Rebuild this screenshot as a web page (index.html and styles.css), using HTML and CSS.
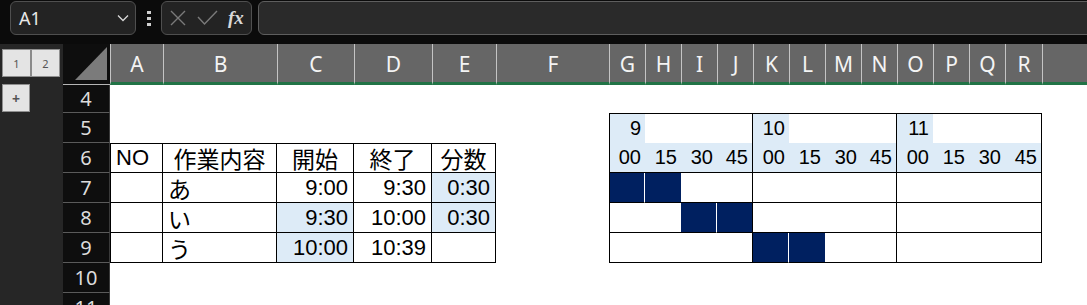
FILE: index.html
```html
<!DOCTYPE html>
<html lang="ja">
<head>
  <meta charset="UTF-8" />
  <title>Sheet</title>
  <link rel="stylesheet" href="styles.css">
</head>
<body>
  <div class="topbar">
    <div class="namebox">
      <span>A1</span>
      <svg class="chev" width="12" height="8" viewBox="0 0 12 8"><path d="M1 1.5 L6 6.5 L11 1.5" fill="none" stroke="#d8d8d8" stroke-width="1.3"/></svg>
    </div>
    <div class="dots"><i></i><i></i><i></i></div>
    <div class="fbtns">
      <svg width="16" height="16" viewBox="0 0 16 16"><path d="M1 1 L15 15 M15 1 L1 15" stroke="#7a7a7a" stroke-width="1.4"/></svg>
      <svg width="21" height="16" viewBox="0 0 21 16"><path d="M1 7 L7.5 14 L20 1" fill="none" stroke="#7a7a7a" stroke-width="1.4"/></svg>
      <span class="fx">fx</span>
    </div>
    <div class="fbar"></div>
  </div>

  <div class="main">
    <div class="outline">
      <div class="levels"><span>1</span><span>2</span></div>
      <div class="plus">+</div>
    </div>

    <div class="sheet">
      <!-- column headers -->
      <div class="corner"><svg width="32" height="33" viewBox="0 0 32 33"><path d="M0 33 L32 0 L32 33 Z" fill="#7b7b7b"/></svg></div>
      <div class="ch">A</div><div class="ch">B</div><div class="ch">C</div><div class="ch">D</div><div class="ch">E</div><div class="ch">F</div>
      <div class="ch">G</div><div class="ch">H</div><div class="ch">I</div><div class="ch">J</div><div class="ch">K</div><div class="ch">L</div>
      <div class="ch">M</div><div class="ch">N</div><div class="ch">O</div><div class="ch">P</div><div class="ch">Q</div><div class="ch">R</div>
      <div class="ch"></div>

      <!-- row 4 -->
      <div class="rh">4</div>
      <div class="c span"></div>

      <!-- row 5 -->
      <div class="rh">5</div>
      <div class="c"></div><div class="c"></div><div class="c"></div><div class="c"></div><div class="c"></div><div class="c"></div>
      <div class="c g t l ra blue">9</div><div class="c g t"></div><div class="c g t"></div><div class="c g t r"></div>
      <div class="c g t ra blue">10</div><div class="c g t"></div><div class="c g t"></div><div class="c g t r"></div>
      <div class="c g t ra blue">11</div><div class="c g t"></div><div class="c g t"></div><div class="c g t r"></div>
      <div class="c"></div>

      <!-- row 6 -->
      <div class="rh">6</div>
      <div class="c t l r b">NO</div><div class="c t r b ca jp">作業内容</div><div class="c t r b ca jp">開始</div><div class="c t r b ca jp">終了</div><div class="c t r b ca jp">分数</div>
      <div class="c"></div>
      <div class="c g l b ra blue">00</div><div class="c g b ra blue">15</div><div class="c g b ra blue">30</div><div class="c g b r ra blue">45</div>
      <div class="c g b ra blue">00</div><div class="c g b ra blue">15</div><div class="c g b ra blue">30</div><div class="c g b r ra blue">45</div>
      <div class="c g b ra blue">00</div><div class="c g b ra blue">15</div><div class="c g b ra blue">30</div><div class="c g b r ra blue">45</div>
      <div class="c"></div>

      <!-- row 7 -->
      <div class="rh">7</div>
      <div class="c l r b"></div><div class="c r b jp">あ</div><div class="c r b ra">9:00</div><div class="c r b ra">9:30</div><div class="c r b ra blue">0:30</div>
      <div class="c"></div>
      <div class="c g l b bar sep"></div><div class="c g b bar"></div><div class="c g b"></div><div class="c g b r"></div>
      <div class="c g b"></div><div class="c g b"></div><div class="c g b"></div><div class="c g b r"></div>
      <div class="c g b"></div><div class="c g b"></div><div class="c g b"></div><div class="c g b r"></div>
      <div class="c"></div>

      <!-- row 8 -->
      <div class="rh">8</div>
      <div class="c l r b"></div><div class="c r b jp">い</div><div class="c r b ra blue">9:30</div><div class="c r b ra">10:00</div><div class="c r b ra blue">0:30</div>
      <div class="c"></div>
      <div class="c g l b"></div><div class="c g b"></div><div class="c g b bar sep"></div><div class="c g b r bar"></div>
      <div class="c g b"></div><div class="c g b"></div><div class="c g b"></div><div class="c g b r"></div>
      <div class="c g b"></div><div class="c g b"></div><div class="c g b"></div><div class="c g b r"></div>
      <div class="c"></div>

      <!-- row 9 -->
      <div class="rh">9</div>
      <div class="c l r b"></div><div class="c r b jp">う</div><div class="c r b ra blue">10:00</div><div class="c r b ra">10:39</div><div class="c r b"></div>
      <div class="c"></div>
      <div class="c g l b"></div><div class="c g b"></div><div class="c g b"></div><div class="c g b r"></div>
      <div class="c g b bar sep"></div><div class="c g b bar"></div><div class="c g b"></div><div class="c g b r"></div>
      <div class="c g b"></div><div class="c g b"></div><div class="c g b"></div><div class="c g b r"></div>
      <div class="c"></div>

      <!-- row 10 -->
      <div class="rh">10</div>
      <div class="c span"></div>

      <!-- row 11 -->
      <div class="rh">11</div>
      <div class="c span"></div>
    </div>
  </div>
</body>
</html>
```

FILE: styles.css
```css
body {
  margin: 0;
  width: 1087px;
  height: 305px;
  overflow: hidden;
  background-color: #0b0b0b;
  font-family: "Liberation Sans", "Noto Sans CJK JP", sans-serif;
}

/* formula bar */
.topbar {
  display: flex;
  align-items: center;
  height: 36px;
  padding-left: 10px;
  box-sizing: border-box;
}

.namebox {
  width: 126px;
  height: 34px;
  box-sizing: border-box;
  border: 1px solid #4f4f4f;
  border-radius: 6px;
  background-color: #232323;
  display: flex;
  align-items: center;
  justify-content: space-between;
  padding: 0 6px 0 8px;
  color: #e8e8e8;
  font-family: "Noto Sans", sans-serif;
  font-size: 18px;
}

.dots {
  display: flex;
  flex-direction: column;
  gap: 3px;
  margin: 0 10px 0 11px;
}

.dots i {
  display: block;
  width: 4px;
  height: 3px;
  background-color: #d0d0d0;
}

.fbtns {
  width: 91px;
  height: 34px;
  box-sizing: border-box;
  border: 1px solid #4f4f4f;
  border-radius: 6px;
  background-color: #232323;
  display: flex;
  align-items: center;
  gap: 11px;
  padding-left: 8px;
}

.fx {
  font-family: "Liberation Serif", serif;
  font-style: italic;
  font-weight: bold;
  font-size: 19px;
  color: #d8d8d8;
  margin-left: -1px;
}

.fbar {
  flex: 1;
  height: 34px;
  margin-left: 6px;
  margin-right: -10px;
  box-sizing: border-box;
  border: 1px solid #5e5e5e;
  border-radius: 6px;
  background-color: #2a2a2a;
}

.main {
  display: flex;
  margin-top: 8px;
}

/* outline panel */
.outline {
  width: 63px;
  flex-shrink: 0;
  background-color: #262626;
  height: 261px;
  padding: 5px 0 0 2px;
  box-sizing: border-box;
}

.levels {
  display: flex;
  width: 58px;
  height: 28px;
  box-sizing: border-box;
  border: 1px solid #8f8f8f;
  background-color: #e4e4e4;
}

.levels span {
  flex: 1;
  display: flex;
  align-items: center;
  justify-content: center;
  font-family: "Noto Sans", sans-serif;
  font-size: 11px;
  color: #555;
}

.levels span + span {
  border-left: 2px solid #8a8a8a;
}

.plus {
  margin-top: 7px;
  width: 28px;
  height: 28px;
  box-sizing: border-box;
  border: 1px solid #8f8f8f;
  background-color: #e4e4e4;
  display: flex;
  align-items: center;
  justify-content: center;
  color: #555;
  font-family: "Noto Sans", sans-serif;
  font-weight: bold;
  font-size: 14px;
}

/* grid */
.sheet {
  display: grid;
  grid-template-columns: 47px 53px 114px 77px 78px 64px 113px repeat(11, 36px) 37px 1fr;
  grid-template-rows: 41px 28px repeat(7, 30px);
  flex: 1;
  background-color: #fff;
}

.corner {
  background-color: #0e0e0e;
  border-bottom: 1px solid #b5b5b5;
  display: flex;
  align-items: flex-end;
  justify-content: flex-end;
  padding: 0 3px 4px 0;
}

.ch {
  background-color: #666;
  color: #f4f4f4;
  border-left: 1px solid #c4c4c4;
  border-bottom: 3px solid #217346;
  display: flex;
  align-items: center;
  justify-content: center;
  font-family: "Noto Sans", sans-serif;
  font-size: 21px;
  padding-top: 1px;
}

.rh {
  background-color: #0e0e0e;
  color: #dcdcdc;
  border-bottom: 1px solid #5a5a5a;
  border-right: 1px solid #3a3a3a;
  display: flex;
  align-items: center;
  justify-content: center;
  font-family: "Noto Sans", sans-serif;
  font-size: 20px;
  line-height: 1;
}

.c {
  background-color: #fff;
  color: #000;
  font-size: 22px;
  display: flex;
  align-items: center;
  padding: 0 5px;
  white-space: nowrap;
  overflow: hidden;
}

.jp {
  font-size: 23px;
}

.span {
  grid-column: 2 / -1;
}

.g {
  font-size: 20px;
  padding: 0 4px;
}

.ra { justify-content: flex-end; }
.ca { justify-content: center; }

.t { border-top: 1px solid #000; }
.l { border-left: 1px solid #000; }
.r { border-right: 1px solid #000; }
.b { border-bottom: 1px solid #000; }

.blue { background-color: #ddebf7; }

.bar { background-color: #002060; }
.sep { border-right: 1px solid #fff; }
```
